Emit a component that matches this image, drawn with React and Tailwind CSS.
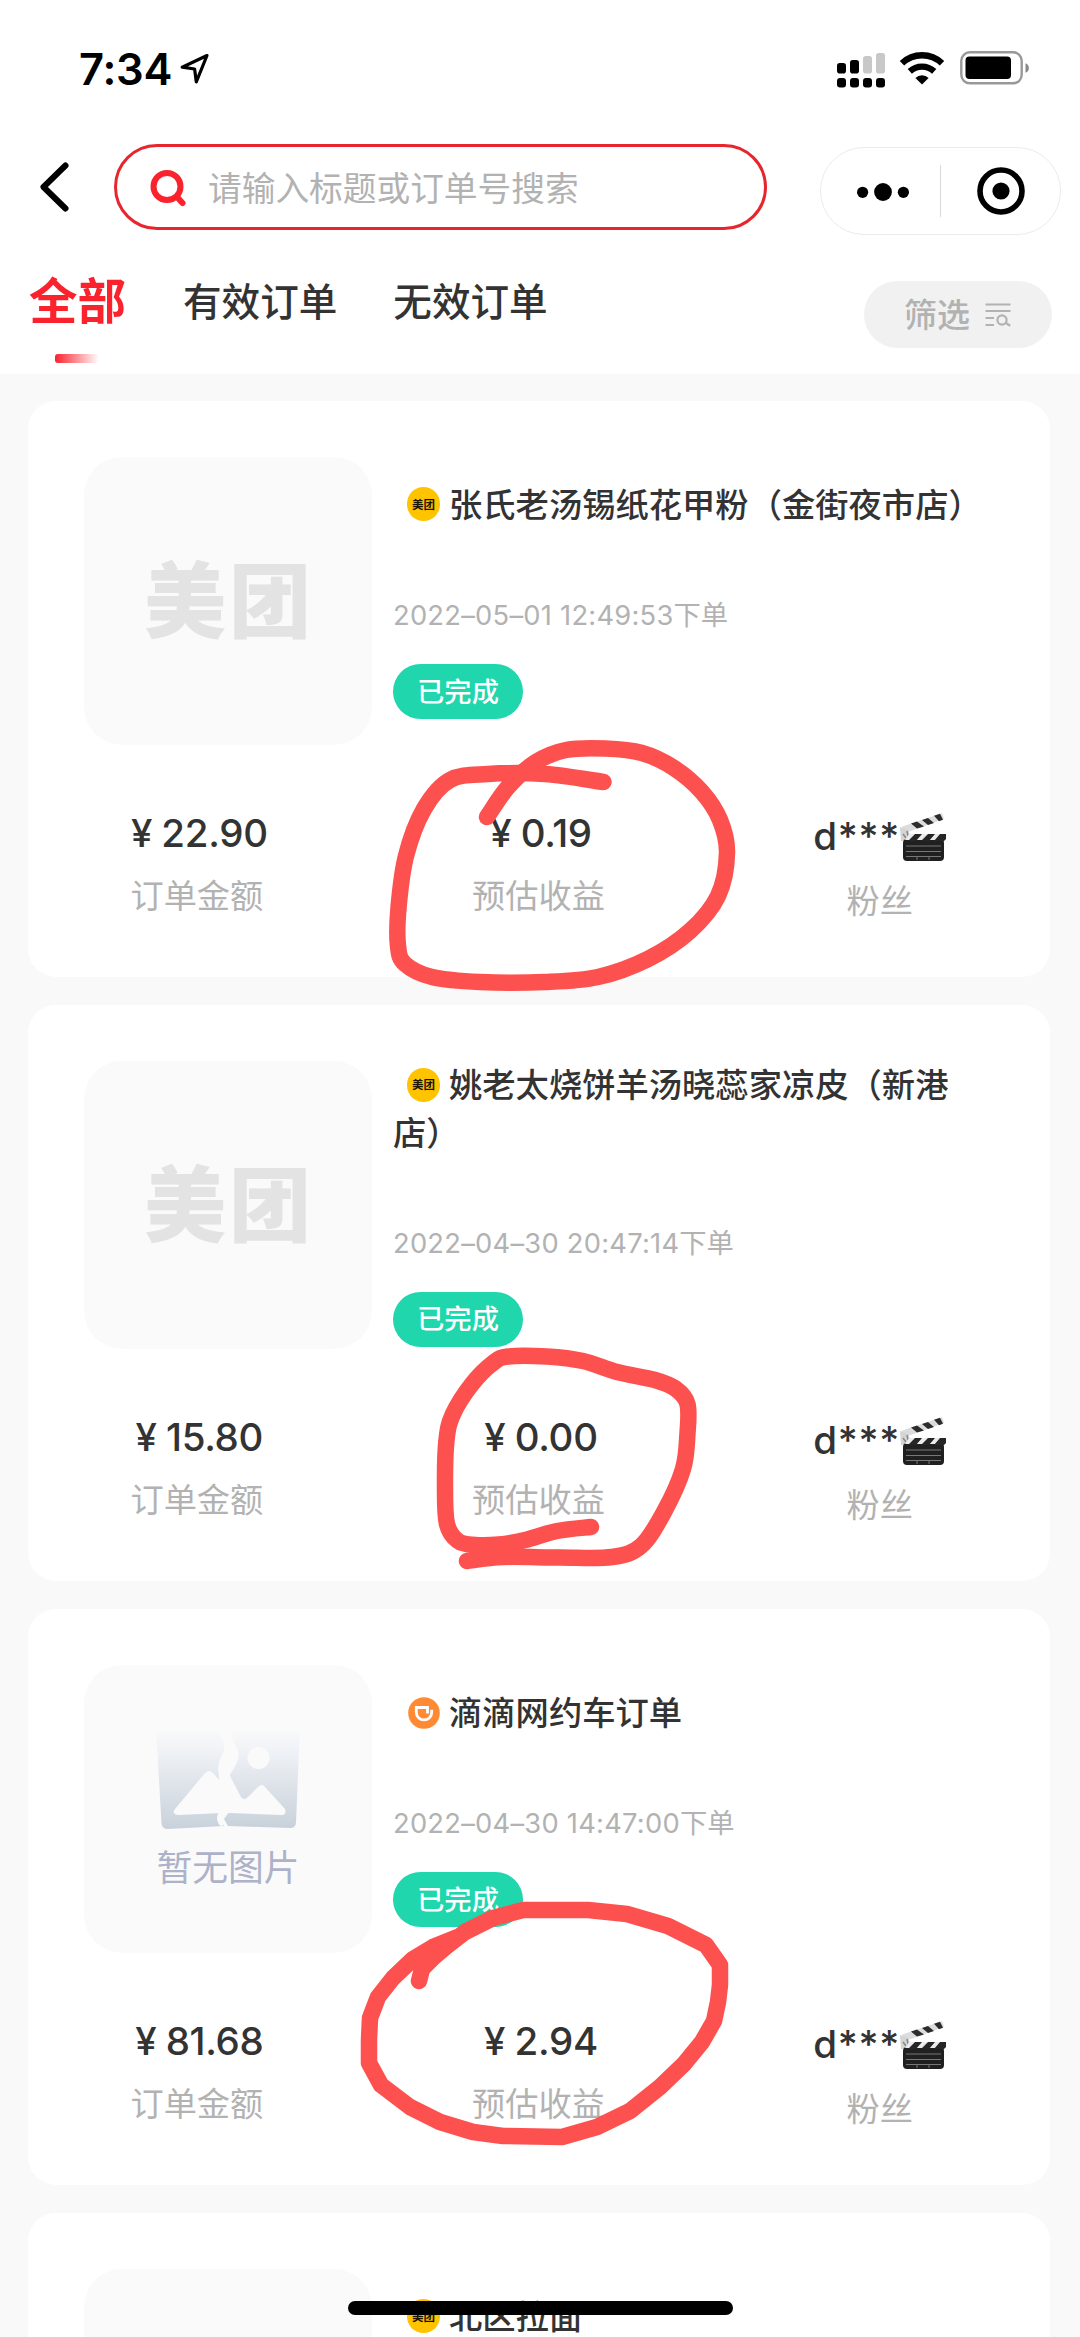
import React from 'react';

const ORDERS = [
  { id: 1, source: 'meituan', title: '张氏老汤锡纸花甲粉（金街夜市店）', time: '2022–05–01 12:49:53', amount: '22.90', income: '0.19' },
  { id: 2, source: 'meituan', title: '姚老太烧饼羊汤晓蕊家凉皮（新港店）', time: '2022–04–30 20:47:14', amount: '15.80', income: '0.00' },
  { id: 3, source: 'didi', title: '滴滴网约车订单', time: '2022–04–30 14:47:00', amount: '81.68', income: '2.94' },
  { id: 4, source: 'meituan', title: '北区拉面' },
];

// Pen strokes drawn over the income column
const LOOP_ONE = [[487, 817], [508, 787], [536, 762], [566, 750], [605, 748.5], [642, 753], [674, 768], [702, 792], [720, 820], [727, 853], [718, 896], [690, 931], [648, 959], [598, 977], [545, 982], [480, 982], [432, 977], [405, 964], [398, 946], [398.5, 908], [406, 856], [424, 809], [450, 780], [488, 774], [545, 774], [603.5, 782]];
const LOOP_TWO = [[467, 1561], [503, 1557], [560, 1557.5], [612, 1557], [641, 1546], [664, 1512], [683, 1469], [687.5, 1433], [687.5, 1404], [676, 1389], [655, 1380], [617, 1372], [583, 1361], [547, 1356.5], [508, 1356.5], [493, 1363], [472, 1384], [453, 1414], [446.5, 1440], [445, 1487], [447, 1524], [458, 1541], [475, 1545], [499, 1544.5], [525, 1540], [557, 1531], [591, 1527]];
const LOOP_THREE = '419,1981 422,1969 434,1957 447,1946 465,1932 493,1918 523,1910 588,1910 627,1914 668,1926 706,1945 720,1965 720,1985 718,2002 714,2021 702,2042 684,2064 660,2087 630,2111 597,2127 562,2137 503,2136 473,2132 440,2122 410,2107 381,2085 369,2063 369,2040 370,2018 378,1997 393,1978 413,1959 433,1947 458,1937';

const smooth = (pts) => {
  let d = `M${pts[0][0]} ${pts[0][1]}`;
  for (let i = 0; i < pts.length - 1; i++) {
    const p0 = pts[i - 1] || pts[i];
    const p1 = pts[i];
    const p2 = pts[i + 1];
    const p3 = pts[i + 2] || p2;
    d += `C${p1[0] + (p2[0] - p0[0]) / 6} ${p1[1] + (p2[1] - p0[1]) / 6} ${p2[0] - (p3[0] - p1[0]) / 6} ${p2[1] - (p3[1] - p1[1]) / 6} ${p2[0]} ${p2[1]}`;
  }
  return d;
};

const StatusBar = () => (
  <div className="h-[132px] pl-[79px] pr-[50px] pt-[7px] flex items-center text-black">
    <span className="font-['Inter'] font-semibold text-[43.5px] leading-none tracking-[-0.2px]">7:34</span>
    <svg className="w-[30px] h-[31px] ml-[8px] -mt-[3px]" viewBox="0 0 30 31" fill="none" stroke="currentColor" strokeWidth="3.2" strokeLinejoin="round">
      <path d="M27 2.5 2.2 14.2 14.6 16 16.3 28.8z" />
    </svg>
    <div className="ml-auto flex items-center">
      <svg className="w-[48px] h-[36px]" viewBox="0 0 48 36">
        <rect x="0" y="11" width="9" height="10.5" rx="2.8" />
        <rect x="13" y="8" width="9" height="13.5" rx="2.8" />
        <rect x="26" y="4" width="9" height="17.5" rx="2.8" fill="#c8c8c8" />
        <rect x="39" y="1" width="9" height="20.5" rx="2.8" fill="#c8c8c8" />
        <rect x="0" y="26" width="9" height="9.5" rx="3" />
        <rect x="13" y="26" width="9" height="9.5" rx="3" />
        <rect x="26" y="26" width="9" height="9.5" rx="3" />
        <rect x="39" y="26" width="9" height="9.5" rx="3" />
      </svg>
      <svg className="w-[46px] h-[34px] ml-[14px] -mt-[3px]" viewBox="0 0 46 34">
        <path d="M3 12.2a29 29 0 0 1 40 0" fill="none" stroke="#000" strokeWidth="6.4" />
        <path d="M10.8 20.4a18 18 0 0 1 24.4 0" fill="none" stroke="#000" strokeWidth="6.2" />
        <path d="M23 33.5l-6.6-6.6a9.6 9.6 0 0 1 13.2 0z" />
      </svg>
      <svg className="w-[70px] h-[34px] ml-[15px] -mt-[3px]" viewBox="0 0 70 34">
        <rect x="1.3" y="1.3" width="60.4" height="31" rx="8.5" fill="none" stroke="#999" strokeWidth="2.4" />
        <rect x="5.5" y="5.5" width="45.5" height="22.5" rx="4" />
        <path d="M65.5 12.2c4.5 1.5 4.5 8 0 9.6z" fill="#888" />
      </svg>
    </div>
  </div>
);

const SearchBar = () => (
  <div className="h-[120px] pl-[36px] pr-[19px] flex items-start">
    <svg className="w-[36px] h-[54px] mt-[28px]" viewBox="0 0 36 54" fill="none" stroke="#000" strokeWidth="6" strokeLinecap="round" strokeLinejoin="round">
      <path d="M29.5 5.5 7.5 27l22 21.5" />
    </svg>
    <div className="ml-[42px] mt-[12px] w-[653px] h-[86px] rounded-full border-3 border-[#e7252c] flex items-center pl-[32px]">
      <svg className="w-[40px] h-[40px] mt-[2px]" viewBox="0 0 40 40" fill="none" stroke="#fa222c" strokeWidth="6" strokeLinecap="round">
        <circle cx="18" cy="18.5" r="13.5" />
        <path d="M28.5 29.5l5 5.5" />
      </svg>
      <span className="ml-[19px] text-[33.7px] leading-none text-[#b2b2b2]">请输入标题或订单号搜索</span>
    </div>
    <div className="ml-[53px] mt-[15px] w-[241px] h-[88px] rounded-full border border-[#ebebeb] flex items-center">
      <svg className="w-[52px] h-[20px] ml-[36px] mt-px" viewBox="0 0 52 20">
        <circle cx="5.6" cy="10.3" r="5.6" />
        <circle cx="26" cy="10" r="8.9" />
        <circle cx="46.4" cy="10.3" r="5.6" />
      </svg>
      <div className="w-px h-[52px] bg-[#d8d8d8] ml-[31px]"></div>
      <svg className="w-[50px] h-[50px] ml-[35px]" viewBox="0 0 50 50">
        <circle cx="25" cy="25" r="21" fill="none" stroke="#000" strokeWidth="5.6" />
        <circle cx="25" cy="25" r="8.6" />
      </svg>
    </div>
  </div>
);

const Tabs = () => (
  <div className="h-[122px] pl-[29px] pr-[28px] flex items-start text-[#333]">
    <div className="w-[97px] flex flex-col">
      <span className="mt-[20px] text-[48.5px] leading-[52px] font-bold text-[#fa222c] whitespace-nowrap">全部</span>
      <span className="mt-[30px] ml-[26px] w-[44px] h-[9px] rounded-[3px] bg-linear-to-r from-[#fa222c] to-[#fa222c]/0"></span>
    </div>
    <span className="ml-[57px] mt-[21px] text-[38.6px] leading-[52px] font-medium">有效订单</span>
    <span className="ml-[56px] mt-[21px] text-[38.6px] leading-[52px] font-medium">无效订单</span>
    <button className="ml-auto mt-[29px] w-[188px] h-[67px] rounded-full bg-[#f1f1f1] text-[#b2b2b2] flex items-center pl-[40px]">
      <span className="text-[33px] leading-none font-medium -mt-[3px]">筛选</span>
      <svg className="w-[26px] h-[25px] ml-[15px]" viewBox="0 0 26 25" fill="none" stroke="currentColor" strokeWidth="2.2">
        <path d="M0.5 2.5h25M0.5 9h25M0.5 16h8.5M0.5 23h8.5" />
        <circle cx="17" cy="18" r="4.6" />
        <path d="M20.2 20.5l5 3.2" />
      </svg>
    </button>
  </div>
);

const SourceIcon = ({ source }) => {
  if (source === 'didi') {
    return (
      <svg className="inline-block w-[32px] h-[32px] ml-[15px] mr-[9px] mb-[6px] align-middle" viewBox="0 0 32 32">
        <circle cx="16" cy="16" r="15.8" fill="#ff8a34" />
        <path d="M19.500 16.500v-6H8.300v4.700a7.700 7.700 0 0 0 15.400 0v-2.500" fill="none" stroke="#fff" strokeWidth="2.8" />
      </svg>
    );
  }
  return (
    <span className="inline-flex w-[33px] h-[34px] ml-[14px] mr-[9px] mb-[6px] align-middle rounded-full bg-[#ffc300] items-center justify-center text-[11.5px] leading-none font-bold text-[#1c1600]">
      美团
    </span>
  );
};

const Thumb = ({ source }) => (
  <div className="w-[288px] h-[288px] shrink-0 rounded-[38px] bg-[#fafafa] flex flex-col items-center justify-center">
    {source === 'didi' ? (
      <>
        <svg className="w-[144px] h-[104px] -mt-[2px]" viewBox="0 0 144 104">
          <defs>
            <linearGradient id="fade" x1="0" y1="0" x2="0" y2="1">
              <stop offset="0" stopColor="#fafafa" />
              <stop offset="0.2" stopColor="#f1f3f7" />
              <stop offset="1" stopColor="#c8d1da" />
            </linearGradient>
          </defs>
          <path d="M0 1H63c-2 9 7 13 5 22-3 8-8 15-5 25l1 34 4 4-4 6 4 7-56 3q-6 0-6.500-6z" fill="url(#fade)" />
          <path d="M77 1h67l-4 94q0 6-6 6l-62-2-4-7 5-7 1-37c4-8 10-14 8-24-3-8-9-14-5-23z" fill="url(#fade)" />
          <path d="M19 82 49 46q4-4 8 0l7 8 2-7h7l12 23q3 4 7 0l10-10q4-4 7 0l20 22q2 6-4 6l-51-2h-8l-44 2q-7-1-3-6z" fill="#fafafa" />
          <path d="M67 85q-7 6 0 13" fill="none" stroke="#fafafa" strokeWidth="5" />
          <circle cx="102.500" cy="31" r="11" fill="#fafafa" />
        </svg>
        <span className="mt-[9px] text-[35.8px] leading-[50px] text-[#adb2c8]">暂无图片</span>
      </>
    ) : (
      <span className="text-[82px] leading-none font-black text-[#e3e3e3] tracking-[3px] ml-[2px] -mt-[10px]">美团</span>
    )}
  </div>
);

const Clapper = () => (
  <svg className="w-[48px] h-[50px] -ml-[2px] mt-[2px]" viewBox="0 0 48 50">
    <path d="M3 15 44 1l2 6L10 20z" fill="#dcdcdc" />
    <path d="M13 11.600l6-2 7 5-7 2zM24 8l6-2 6 5-6 2zM36 3.800l6-2 3 6-4 1.500z" fill="#2c2c2c" />
    <path d="M2 15l8 3 2 5-4 6H3z" fill="#d4d4d4" />
    <path d="M5 22l3 4M9 19l1 5" stroke="#888" strokeWidth="1.500" />
    <rect x="5" y="27" width="41" height="22" rx="4" fill="#202020" />
    <path d="M11 22h37v6H7z" fill="#ececec" />
    <path d="M17 22h7l-6 7h-8zM30 22h7l-6 7h-8zM42 22h6v5l-2 2h-10z" fill="#262626" />
    <path d="M8 34h35M8 39.500h35M8 44.500h35M19 44v4M31 44v4" stroke="#777" strokeWidth="1" />
  </svg>
);

const Price = ({ value }) => (
  <span className="h-[44px] pl-[5px] flex items-center font-['Inter'] font-medium text-[38.5px] leading-none text-[#333]">
    <span className="mr-[9px]">¥</span>
    <span className="tracking-[-0.3px]">{value}</span>
  </span>
);

const OrderCard = ({ order }) => (
  <div className="h-[576px] shrink-0 rounded-[28px] bg-white pt-[56px]">
    <div className="h-[288px] pl-[56px] pr-[56px] flex items-center">
      <Thumb source={order.source} />
      <div className="ml-[21px] flex-1 flex flex-col items-start">
        <h3 className="-mt-[3px] text-[33.3px] leading-[46.5px] font-medium text-[#333]">
          <SourceIcon source={order.source} />
          {order.title}
        </h3>
        <p className="h-[39px] mt-[67px] text-[27.3px] leading-[39px] text-[#b2b2b2] whitespace-nowrap">
          {order.time && (
            <>
              <span className="font-['Inter'] tracking-[0.25px]">{order.time}</span>下单
            </>
          )}
        </p>
        <span className="mt-[31px] w-[130px] h-[55px] pb-[3px] rounded-full bg-[#1fd6ad] text-white text-[27.3px] font-medium flex items-center justify-center">
          {order.time && '已完成'}
        </span>
      </div>
    </div>
    {order.amount && (
      <div className="grid grid-cols-3 pt-[66px] text-[33.2px] text-[#b2b2b2]">
        <div className="flex flex-col items-center pr-[3px]">
          <Price value={order.amount} />
          <span className="mt-[15px] leading-[48px]">订单金额</span>
        </div>
        <div className="flex flex-col items-center pr-[1px]">
          <Price value={order.income} />
          <span className="mt-[15px] leading-[48px]">预估收益</span>
        </div>
        <div className="flex flex-col items-center">
          <span className="h-[50px] flex items-center text-[#333]">
            <span className="font-['Inter'] font-medium text-[38.5px] leading-none tracking-[0.7px]">d***</span>
            <Clapper />
          </span>
          <span className="mt-[14px] leading-[48px]">粉丝</span>
        </div>
      </div>
    )}
  </div>
);

export default function App() {
  return (
    <div className="relative w-[1080px] h-[2337px] overflow-hidden bg-[#f9f9f9] font-['Noto_Sans_CJK_SC',sans-serif]">
      <header className="h-[374px] bg-white">
        <StatusBar />
        <SearchBar />
        <Tabs />
      </header>
      <main className="pl-[28px] pr-[30px] pt-[27px] flex flex-col gap-[28px]">
        {ORDERS.map((order) => (
          <OrderCard key={order.id} order={order} />
        ))}
      </main>

      {/* Hand-drawn circles */}
      <svg className="absolute inset-0 w-full h-full pointer-events-none" viewBox="0 0 1080 2337" fill="none" stroke="#fd5150" strokeWidth="16.5" strokeLinecap="round" strokeLinejoin="round">
        <path d={smooth(LOOP_ONE)} />
        <path d={smooth(LOOP_TWO)} />
        <polyline points={LOOP_THREE} />
      </svg>

      {/* Home indicator */}
      <div className="absolute left-[348px] bottom-[22px] w-[385px] h-[14px] rounded-full bg-black"></div>
    </div>
  );
}
